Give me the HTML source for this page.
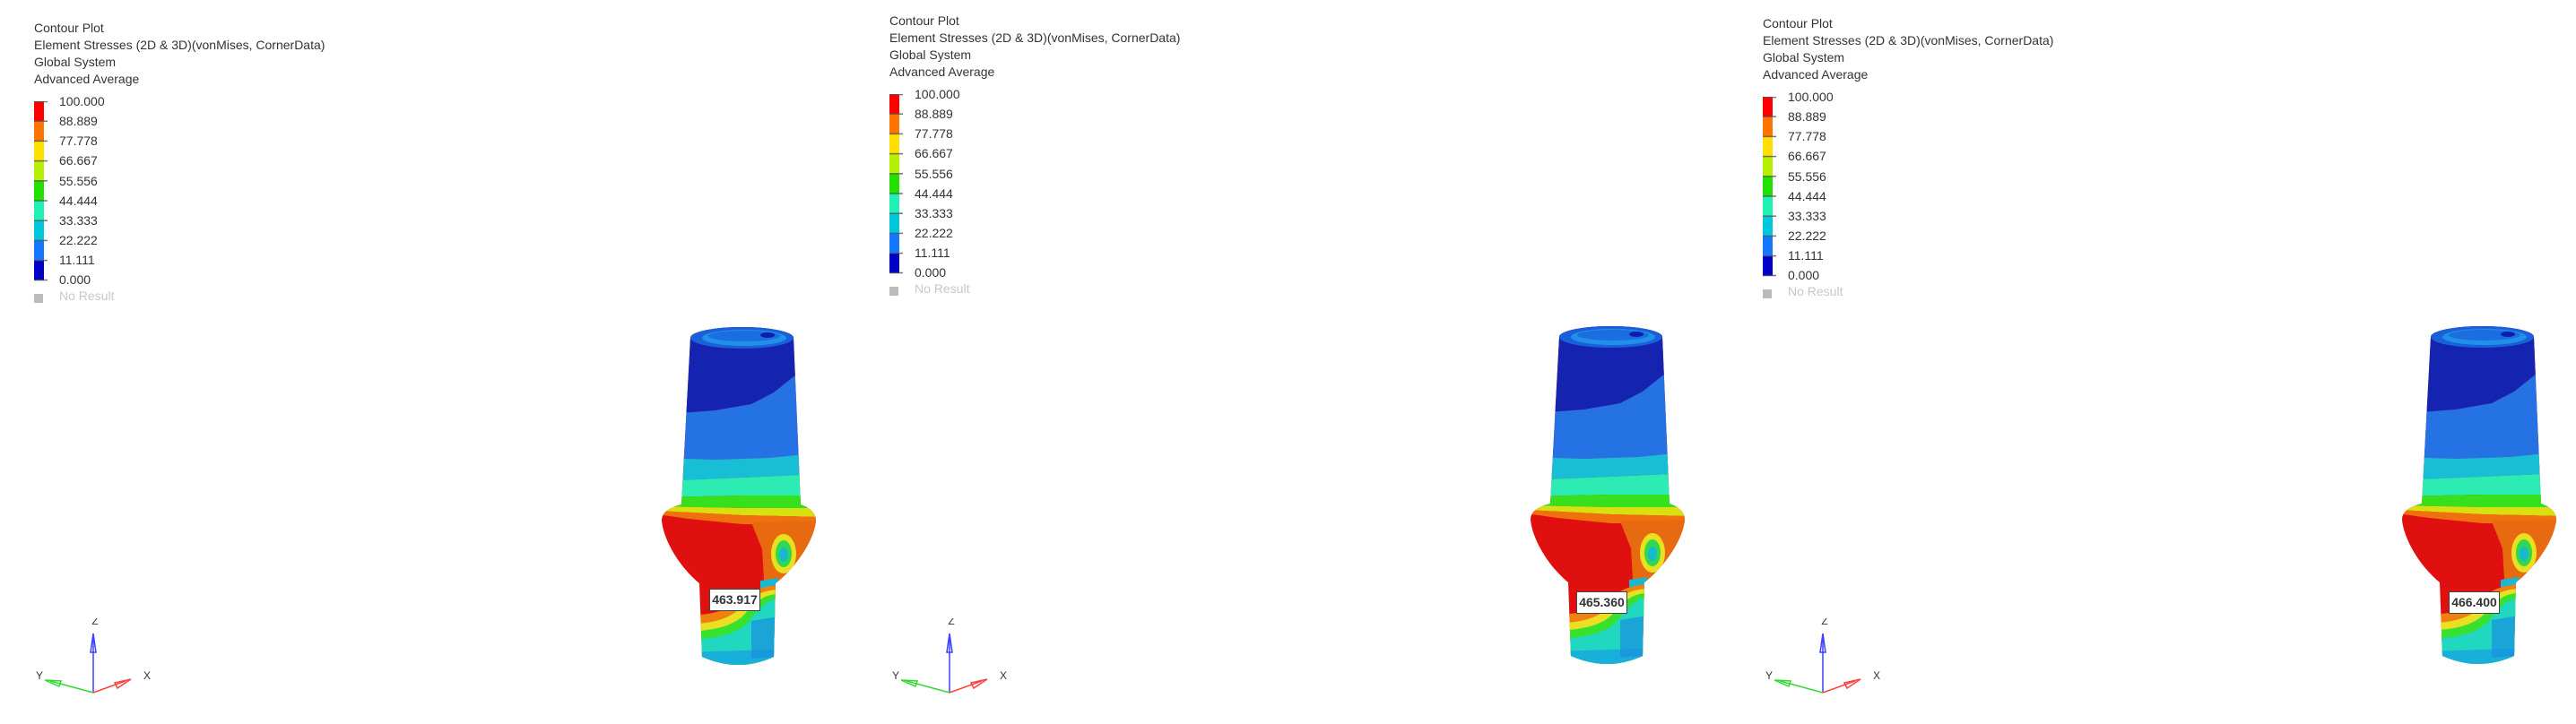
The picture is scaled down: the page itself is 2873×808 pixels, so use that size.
<!DOCTYPE html>
<html><head><meta charset="utf-8"><style>
html,body{margin:0;padding:0;background:#fff;}
body{width:2873px;height:808px;position:relative;overflow:hidden;font-family:"Liberation Sans",sans-serif;}
.leg{position:absolute;width:400px;height:340px;}
.hd{position:absolute;left:0;font-size:14px;color:#333;white-space:nowrap;line-height:19px;}
.lb{position:absolute;left:28px;font-size:14px;color:#333;line-height:16px;}
.model{position:absolute;width:180px;height:390px;}
.tag{position:absolute;width:55px;height:23px;border:1px solid #444;background:#fff;font-size:14px;font-weight:bold;color:#333;text-align:center;line-height:23px;}
.triad{position:absolute;width:140px;height:110px;}
</style></head><body>

<svg width="0" height="0" style="position:absolute">
<defs>
<clipPath id="cp"><path d="M32,14 L22,200 C10,203 0,208 0,218 C2,240 20,270 42,288 L45,370 Q86,388 125,370 L127,288 C150,270 170,240 172,218 C172,208 163,203 155,200 L147,14 A57.5,12 0 0 0 32,14 Z"/></clipPath>
<g id="abut">
<g clip-path="url(#cp)">
<rect x="-5" y="-5" width="185" height="400" fill="#e01010"/>
<polygon points="-5,-5 180,-5 180,50 150,55 125,75 100,88 60,95 -5,100" fill="#1424b0"/>
<polygon points="-5,100 60,95 100,88 125,75 150,55 180,50 180,142 120,148 60,150 -5,148" fill="#2472e4"/>
<polygon points="-5,148 60,150 120,148 180,142 180,166 90,170 -5,174" fill="#18bed6"/>
<polygon points="-5,174 90,170 180,166 180,190 90,190 -5,192" fill="#2cecb4"/>
<polygon points="-5,192 90,190 180,190 180,204 90,204 -5,202" fill="#36e01c"/>
<polygon points="-5,202 90,204 180,204 180,214 90,212 -5,207" fill="#d8e010"/>
<polygon points="-5,207 90,212 180,214 180,222 90,222 30,216 -5,211" fill="#f07010"/>
<polygon points="100,220 180,218 180,300 115,300 112,250" fill="#e86a10"/>
<ellipse cx="136" cy="255" rx="14" ry="22" fill="#e8e020"/>
<ellipse cx="136" cy="255" rx="9" ry="15" fill="#30d850"/>
<ellipse cx="136" cy="256" rx="5" ry="8" fill="#18b8d0"/>
<polygon points="110,285 130,282 130,300 110,300" fill="#18b8d0"/>
<path d="M-5,322 C30,325 60,325 80,312 C95,300 105,292 130,290 L130,390 L-5,390 Z" fill="#f08010"/>
<path d="M-5,332 C30,335 65,335 85,318 C98,305 108,296 130,295 L130,390 L-5,390 Z" fill="#e8e020"/>
<path d="M-5,340 C30,343 70,343 90,325 C102,312 112,300 130,300 L130,390 L-5,390 Z" fill="#38e030"/>
<path d="M-5,350 C30,352 75,352 95,333 C106,320 116,306 130,305 L130,390 L-5,390 Z" fill="#20d8c0"/>
<polygon points="-5,366 180,360 180,390 -5,390" fill="#18b0d8"/>
<polygon points="100,330 130,325 130,370 100,372" fill="#1a90e0" opacity=".7"/>
</g>
<ellipse cx="89.5" cy="14" rx="57.5" ry="12" fill="#1a60d8"/>
<ellipse cx="92" cy="14" rx="47" ry="9" fill="#2090e8"/>
<ellipse cx="92" cy="12" rx="40" ry="6" fill="#1a6ee0"/>
<ellipse cx="118" cy="11" rx="8" ry="3" fill="#0c1db0"/>
</g>
<g id="legbar">
<rect x="0" y="0" width="11" height="22.2" fill="#ff0000"/>
<rect x="0" y="22.2" width="11" height="22.2" fill="#ff7300"/>
<rect x="0" y="44.4" width="11" height="22.2" fill="#ffdf00"/>
<rect x="0" y="66.6" width="11" height="22.2" fill="#b4f000"/>
<rect x="0" y="88.8" width="11" height="22.2" fill="#22e000"/>
<rect x="0" y="111" width="11" height="22.2" fill="#20f0b4"/>
<rect x="0" y="133.2" width="11" height="22.2" fill="#00c8dc"/>
<rect x="0" y="155.4" width="11" height="22.2" fill="#1478ff"/>
<rect x="0" y="177.6" width="11" height="22.4" fill="#0000c8"/>
<g stroke="#555" stroke-width="1.5" opacity=".8">
<line x1="0" y1="0.5" x2="15" y2="0.5"/><line x1="0" y1="22.2" x2="15" y2="22.2"/><line x1="0" y1="44.4" x2="15" y2="44.4"/><line x1="0" y1="66.6" x2="15" y2="66.6"/><line x1="0" y1="88.8" x2="15" y2="88.8"/><line x1="0" y1="111" x2="15" y2="111"/><line x1="0" y1="133.2" x2="15" y2="133.2"/><line x1="0" y1="155.4" x2="15" y2="155.4"/><line x1="0" y1="177.6" x2="15" y2="177.6"/><line x1="0" y1="199.5" x2="15" y2="199.5"/>
</g>
<rect x="0" y="215" width="10" height="10" fill="#bbb"/>
</g>
<g id="tri">
<line x1="64" y1="83" x2="64" y2="22" stroke="#4040ff" stroke-width="1.5"/>
<polygon points="64,17 61,38 67,38" fill="none" stroke="#4040ff" stroke-width="1.5"/>
<line x1="64" y1="83" x2="100" y2="70" stroke="#ff4040" stroke-width="1.5"/>
<polygon points="106,68 88,72 91,78" fill="none" stroke="#ff4040" stroke-width="1.5"/>
<line x1="64" y1="83" x2="16" y2="70" stroke="#30d830" stroke-width="1.5"/>
<polygon points="10,69 28,70 26,76" fill="none" stroke="#30d830" stroke-width="1.5"/>
<text x="66" y="7" font-family="Liberation Sans" font-size="12" fill="#333" text-anchor="middle">Z</text>
<text x="120" y="68" font-family="Liberation Sans" font-size="12" fill="#333">X</text>
<text x="0" y="68" font-family="Liberation Sans" font-size="12" fill="#333">Y</text>
</g>
</defs>
</svg>

<!-- Panel 1 -->
<div class="leg" style="left:38px;top:22px;">
<div class="hd" style="top:0">Contour Plot</div>
<div class="hd" style="top:19px">Element Stresses (2D &amp; 3D)(vonMises, CornerData)</div>
<div class="hd" style="top:38px">Global System</div>
<div class="hd" style="top:57px">Advanced Average</div>
<svg style="position:absolute;left:0;top:91px" width="20" height="230"><use href="#legbar"/></svg>
<div class="lb" style="top:83px">100.000</div>
<div class="lb" style="top:105px">88.889</div>
<div class="lb" style="top:127px">77.778</div>
<div class="lb" style="top:149px">66.667</div>
<div class="lb" style="top:172px">55.556</div>
<div class="lb" style="top:194px">44.444</div>
<div class="lb" style="top:216px">33.333</div>
<div class="lb" style="top:238px">22.222</div>
<div class="lb" style="top:260px">11.111</div>
<div class="lb" style="top:282px">0.000</div>
<div class="lb" style="top:300px;color:#c8c8c8">No Result</div>
</div>
<svg class="model" style="left:738px;top:363px"><use href="#abut"/></svg>
<div class="tag" style="left:791px;top:657px">463.917</div>
<svg class="triad" style="left:40px;top:690px"><use href="#tri"/></svg>

<!-- Panel 2 -->
<div class="leg" style="left:992px;top:14px;">
<div class="hd" style="top:0">Contour Plot</div>
<div class="hd" style="top:19px">Element Stresses (2D &amp; 3D)(vonMises, CornerData)</div>
<div class="hd" style="top:38px">Global System</div>
<div class="hd" style="top:57px">Advanced Average</div>
<svg style="position:absolute;left:0;top:91px" width="20" height="230"><use href="#legbar"/></svg>
<div class="lb" style="top:83px">100.000</div>
<div class="lb" style="top:105px">88.889</div>
<div class="lb" style="top:127px">77.778</div>
<div class="lb" style="top:149px">66.667</div>
<div class="lb" style="top:172px">55.556</div>
<div class="lb" style="top:194px">44.444</div>
<div class="lb" style="top:216px">33.333</div>
<div class="lb" style="top:238px">22.222</div>
<div class="lb" style="top:260px">11.111</div>
<div class="lb" style="top:282px">0.000</div>
<div class="lb" style="top:300px;color:#c8c8c8">No Result</div>
</div>
<svg class="model" style="left:1707px;top:362px"><use href="#abut"/></svg>
<div class="tag" style="left:1758px;top:660px">465.360</div>
<svg class="triad" style="left:995px;top:690px"><use href="#tri"/></svg>

<!-- Panel 3 -->
<div class="leg" style="left:1966px;top:17px;">
<div class="hd" style="top:0">Contour Plot</div>
<div class="hd" style="top:19px">Element Stresses (2D &amp; 3D)(vonMises, CornerData)</div>
<div class="hd" style="top:38px">Global System</div>
<div class="hd" style="top:57px">Advanced Average</div>
<svg style="position:absolute;left:0;top:91px" width="20" height="230"><use href="#legbar"/></svg>
<div class="lb" style="top:83px">100.000</div>
<div class="lb" style="top:105px">88.889</div>
<div class="lb" style="top:127px">77.778</div>
<div class="lb" style="top:149px">66.667</div>
<div class="lb" style="top:172px">55.556</div>
<div class="lb" style="top:194px">44.444</div>
<div class="lb" style="top:216px">33.333</div>
<div class="lb" style="top:238px">22.222</div>
<div class="lb" style="top:260px">11.111</div>
<div class="lb" style="top:282px">0.000</div>
<div class="lb" style="top:300px;color:#c8c8c8">No Result</div>
</div>
<svg class="model" style="left:2679px;top:362px"><use href="#abut"/></svg>
<div class="tag" style="left:2731px;top:660px">466.400</div>
<svg class="triad" style="left:1969px;top:690px"><use href="#tri"/></svg>

</body></html>
